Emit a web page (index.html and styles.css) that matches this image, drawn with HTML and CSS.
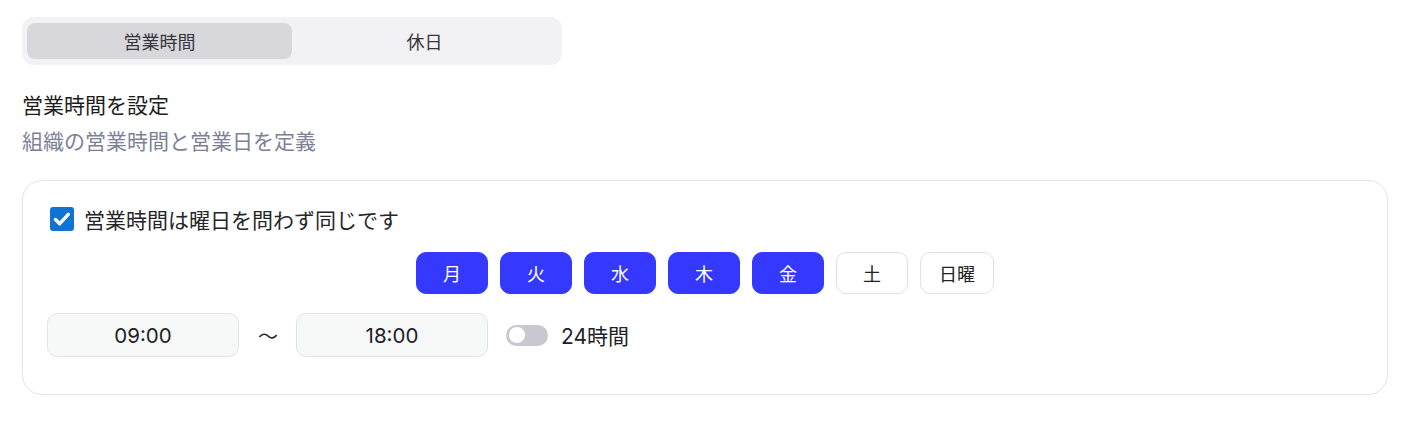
FILE: index.html
```html
<!DOCTYPE html>
<html lang="ja">
<head>
<meta charset="utf-8">
<title>営業時間</title>
<link rel="stylesheet" href="styles.css">
</head>
<body>
<div class="page">
  <div class="tabs">
    <div class="tab tab-active">営業時間</div>
    <div class="tab">休日</div>
  </div>

  <h2 class="title">営業時間を設定</h2>
  <p class="subtitle">組織の営業時間と営業日を定義</p>

  <div class="card">
    <label class="check-row">
      <span class="checkbox">
        <svg viewBox="0 0 24 24" width="24" height="24"><path d="M5.5 12.5l4.2 4.2 8.6-9.4" fill="none" stroke="#fff" stroke-width="3.4" stroke-linecap="round" stroke-linejoin="round"/></svg>
      </span>
      <span class="check-label">営業時間は曜日を問わず同じです</span>
    </label>

    <div class="days">
      <button class="day day-on">月</button>
      <button class="day day-on">火</button>
      <button class="day day-on">水</button>
      <button class="day day-on">木</button>
      <button class="day day-on">金</button>
      <button class="day">土</button>
      <button class="day">日曜</button>
    </div>

    <div class="time-row">
      <div class="time-input">09:00</div>
      <span class="tilde">～</span>
      <div class="time-input">18:00</div>
      <span class="toggle"><span class="knob"></span></span>
      <span class="toggle-label">24時間</span>
    </div>
  </div>
</div>
</body>
</html>
```

FILE: styles.css
```css
* { box-sizing: border-box; }

html, body {
  margin: 0;
  padding: 0;
  background: #ffffff;
}

body {
  font-family: Inter, "Noto Sans CJK JP", sans-serif;
  color: #1f1f23;
}

.page {
  padding: 17px 26px 0 22px;
}

.tabs {
  width: 540px;
  height: 48px;
  background: #f2f2f4;
  border-radius: 12px;
  padding: 6px 5px;
  display: flex;
}

.tab {
  flex: 1;
  display: flex;
  align-items: center;
  justify-content: center;
  font-size: 18px;
  color: #36363c;
  border-radius: 8px;
}

.tab-active {
  background: #d7d7dc;
}

.title {
  margin: 27px 0 0 0;
  font-size: 21px;
  line-height: 28px;
  font-weight: 400;
  color: #1d1d20;
}

.subtitle {
  margin: 8px 0 0 0;
  font-size: 21px;
  line-height: 28px;
  color: #7d8196;
}

.card {
  margin-top: 24px;
  border: 1px solid #e4e4e8;
  border-radius: 20px;
  padding: 25px 24px 37px 24px;
}

.check-row {
  display: flex;
  align-items: center;
  height: 26px;
  padding-left: 3px;
}

.checkbox {
  width: 24px;
  height: 24px;
  border-radius: 3px;
  background: #0f73d6;
  display: flex;
  align-items: center;
  justify-content: center;
}

.checkbox svg { display: block; }

.check-label {
  margin-left: 10px;
  font-size: 21px;
  color: #26262a;
}

.days {
  margin-top: 20px;
  display: flex;
  justify-content: center;
  gap: 12px;
}

.day {
  height: 42px;
  min-width: 72px;
  padding: 0 18px;
  border-radius: 10px;
  border: 1px solid #e2e2e5;
  background: #ffffff;
  font-family: Inter, "Noto Sans CJK JP", sans-serif;
  font-size: 18px;
  color: #222226;
}

.day-on {
  background: #3538ff;
  border-color: #3538ff;
  color: #ffffff;
}

.time-row {
  margin-top: 19px;
  display: flex;
  align-items: center;
}

.time-input {
  width: 192px;
  height: 44px;
  border: 1px solid #e2e4e6;
  border-radius: 10px;
  background: #f7f8f8;
  display: flex;
  align-items: center;
  justify-content: center;
  font-size: 20.5px;
  color: #222226;
}

.tilde {
  margin: 0 18px 0 19px;
  font-size: 20px;
  color: #2a2a2e;
}

.toggle {
  margin-left: 18px;
  width: 42px;
  height: 21px;
  border-radius: 11px;
  background: #c8c8d0;
  position: relative;
}

.knob {
  position: absolute;
  left: 3px;
  top: 2.5px;
  width: 16px;
  height: 16px;
  border-radius: 50%;
  background: #ffffff;
}

.toggle-label {
  margin-left: 13px;
  font-size: 21px;
  color: #222226;
}
```
